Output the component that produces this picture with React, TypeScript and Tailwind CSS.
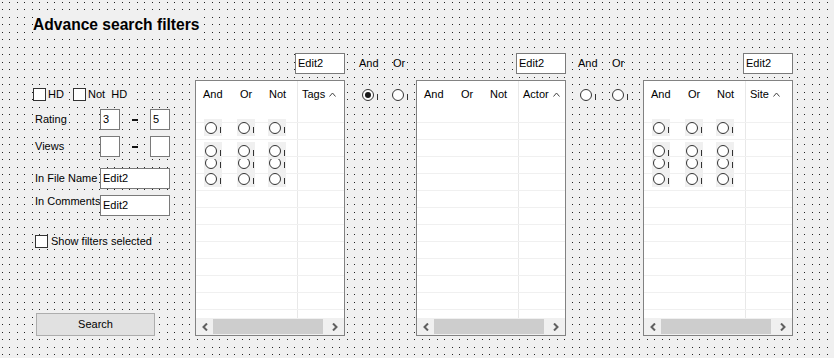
const dots =
  "bg-[#f0f0f0] [background-image:radial-gradient(circle_at_2.5px_2.5px,#222_0.6px,transparent_0.6px),radial-gradient(circle_at_9.5px_2.5px,#222_0.6px,transparent_0.6px),radial-gradient(circle_at_2.5px_9.5px,#222_0.6px,transparent_0.6px),radial-gradient(circle_at_9.5px_9.5px,#222_0.6px,transparent_0.6px)] [background-size:15px_15px]";

const Radio = ({ checked = false }: { checked?: boolean }) => (
  <div className="w-[18px] h-[17px] bg-[#f0f0f0] flex items-start pl-[1px] pt-[3px]">
    <div className="w-[12px] h-[12px] rounded-full border border-[#333] bg-white flex items-center justify-center">
      {checked && <div className="w-[6px] h-[6px] rounded-full bg-[#1a1a1a]" />}
    </div>
    <div className="ml-[3px] mt-[5px] w-[1px] h-[6px] bg-[#333]" />
  </div>
);

const CheckBox = () => <div className="w-[13px] h-[13px] border border-[#333] bg-white shrink-0" />;

const Edit = ({ value = "", w }: { value?: string; w: string }) => (
  <div className={`${w} h-[21px] border border-[#7a7a7a] bg-white flex items-center pl-[2px] shrink-0`}>
    {value}
  </div>
);

const Chevron = ({ dir }: { dir: "left" | "right" | "up" }) => {
  if (dir === "up")
    return (
      <svg width="7" height="5" viewBox="0 0 7 5" className="ml-[4px] mb-[1px]">
        <polyline points="0.5,4.5 3.5,1 6.5,4.5" fill="none" stroke="#444" strokeWidth="1" />
      </svg>
    );
  return (
    <svg width="6" height="8" viewBox="0 0 6 8">
      <polyline
        points={dir === "left" ? "5,0.5 1.5,4 5,7.5" : "1,0.5 4.5,4 1,7.5"}
        fill="none"
        stroke="#606060"
        strokeWidth="2"
      />
    </svg>
  );
};

const radioTops = ["top-[89px]", "top-[73px]", "top-[61px]", "top-[38px]"];
const radioLefts = ["left-[8px]", "left-[41px]", "left-[72px]"];

const ListPanel = ({ title, radios }: { title: string; radios?: boolean }) => (
  <div className="relative w-[150px] h-[256px] border border-[#828282] bg-white flex flex-col">
    <div className="h-[41px] flex shrink-0">
      <div className="w-[101px] h-[27px] flex items-center pl-[7px]">
        <span className="w-[37px]">And</span>
        <span className="w-[29px]">Or</span>
        <span>Not</span>
      </div>
      <div className="flex-1 border-l border-[#e8e8e8] h-full">
        <div className="h-[27px] flex items-center pl-[4px]">
          <span>{title}</span>
          <Chevron dir="up" />
        </div>
      </div>
    </div>
    <div className="flex-1 overflow-hidden">
      {Array.from({ length: 12 }).map((_, i) => (
        <div key={i} className="h-[17px] border-t border-[#f0f0f0] flex">
          <div className="w-[101px]" />
          <div className="flex-1 border-l border-[#e8e8e8]" />
        </div>
      ))}
    </div>
    <div className="h-[17px] bg-[#f0f0f0] flex shrink-0">
      <div className="w-[17px] flex items-center justify-center">
        <Chevron dir="left" />
      </div>
      <div className="flex-1 mt-[1px] h-[15px] bg-[#cdcdcd]" />
      <div className="w-[21px] flex items-center justify-end pr-[6px]">
        <Chevron dir="right" />
      </div>
    </div>
    {radios &&
      radioTops.map((t) =>
        radioLefts.map((l) => (
          <div key={t + l} className={`absolute ${t} ${l}`}>
            <Radio />
          </div>
        ))
      )}
  </div>
);

const PanelGroup = ({ title, radios }: { title: string; radios?: boolean }) => (
  <div className="flex flex-col items-end">
    <Edit value="Edit2" w="w-[50px]" />
    <div className="mt-[6px]">
      <ListPanel title={title} radios={radios} />
    </div>
  </div>
);

const Field = ({ label, children, top }: { label: string; children: React.ReactNode; top?: boolean }) => (
  <div className={`flex h-[21px] ${top ? "items-start" : "items-center"}`}>
    <div className="ml-[2px] w-[65px]">
      <span className="bg-[#f0f0f0] whitespace-nowrap">{label}</span>
    </div>
    {children}
  </div>
);

const Range = ({ a = "", b = "" }: { a?: string; b?: string }) => (
  <div className="flex items-center">
    <Edit value={a} w="w-[20px]" />
    <div className="w-[30px] flex justify-center">
      <div className="w-[6px] h-[2px] bg-[#111] mt-[1px]" />
    </div>
    <Edit value={b} w="w-[20px]" />
  </div>
);

const AndOr = ({ pl, w, rpl, gap, checked }: { pl: string; w: string; rpl: string; gap: string; checked?: boolean }) => (
  <div className={`${w} flex flex-col`}>
    <div className={`h-[21px] flex items-center ${pl}`}>
      <span className="w-[34px]">
        <span className="bg-[#f0f0f0]">And</span>
      </span>
      <span className="bg-[#f0f0f0]">Or</span>
    </div>
    <div className={`mt-[12px] flex ${rpl} ${gap}`}>
      <Radio checked={checked} />
      <Radio />
    </div>
  </div>
);

export default function App() {
  return (
    <div
      className={`w-[834px] h-[358px] overflow-hidden ${dots} font-['Liberation_Sans',Arial,sans-serif] text-[11px] leading-[13px] text-black pl-[33px] pt-[16px]`}
    >
      <h1 className="inline-block bg-[#f0f0f0] font-bold text-[15.6px] leading-[18px]">Advance search filters</h1>
      <div className="flex items-start mt-[19px]">
        {/* left filters */}
        <div className="w-[162px] flex flex-col pt-[35px]">
          <div className="flex items-center h-[13px]">
            <div className="w-[40px] flex items-center">
              <CheckBox />
              <span className="pl-[2px] pr-[4px] bg-[#f0f0f0]">HD</span>
            </div>
            <CheckBox />
            <span className="pl-[2px] pr-[4px] bg-[#f0f0f0] whitespace-pre">Not  HD</span>
          </div>
          <div className="mt-[8px]">
            <Field label="Rating">
              <Range a="3" b="5" />
            </Field>
          </div>
          <div className="mt-[6px]">
            <Field label="Views">
              <Range />
            </Field>
          </div>
          <div className="mt-[11px]">
            <Field label="In File Name">
              <Edit value="Edit2" w="w-[70px]" />
            </Field>
          </div>
          <div className="mt-[6px]">
            <Field label="In Comments" top>
              <Edit value="Edit2" w="w-[70px]" />
            </Field>
          </div>
          <div className="mt-[19px] ml-[2px] flex items-center h-[13px]">
            <CheckBox />
            <span className="pl-[3px] pr-[4px] bg-[#f0f0f0]">Show filters selected</span>
          </div>
          <button className="mt-[65px] ml-[3px] w-[119px] h-[23px] border border-[#adadad] bg-[#e1e1e1] text-[11px]">
            Search
          </button>
        </div>

        <PanelGroup title="Tags" radios />

        <AndOr w="w-[71px]" pl="pl-[14px]" rpl="pl-[16px]" gap="gap-[12px]" checked />

        <PanelGroup title="Actor" />

        <AndOr w="w-[77px]" pl="pl-[12px]" rpl="pl-[13px]" gap="gap-[14px]" />

        <PanelGroup title="Site" radios />
      </div>
    </div>
  );
}
